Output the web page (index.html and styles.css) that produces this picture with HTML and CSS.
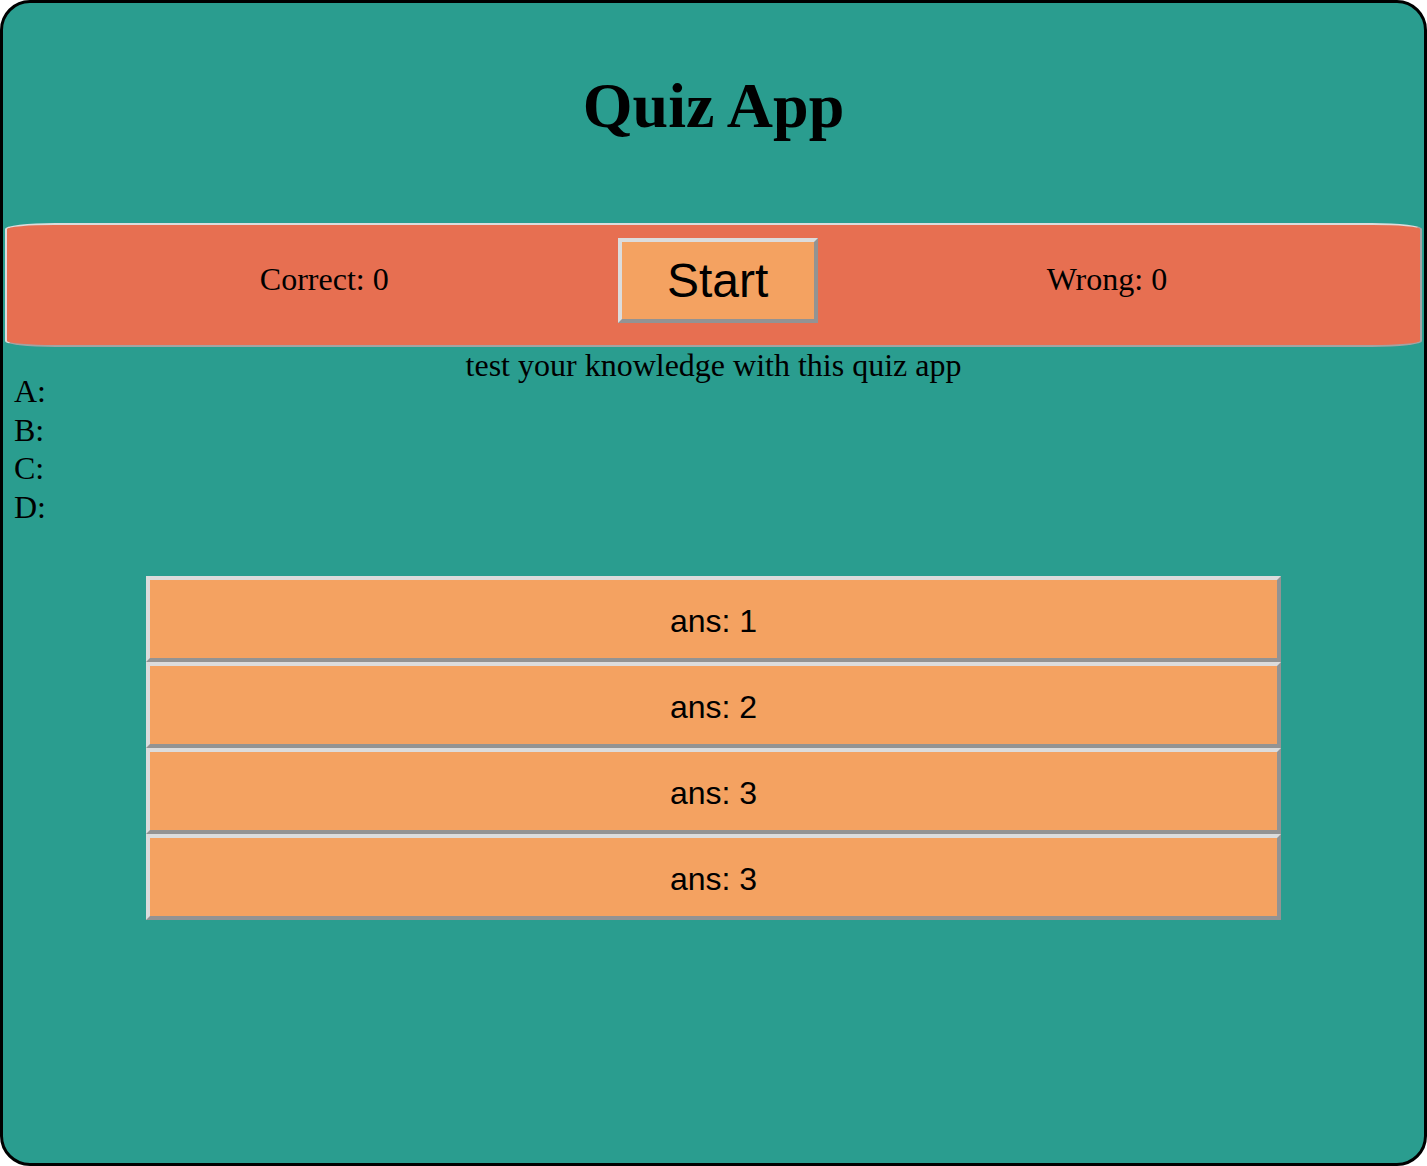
FILE: index.html
```html
<!DOCTYPE html>
<html lang="en">
<head>
<meta charset="utf-8">
<title>Quiz App</title>
<link rel="stylesheet" href="styles.css">
</head>
<body>
<div class="app">
  <h1 class="title">Quiz App</h1>
  <div class="scorebar">
    <span class="score">Correct: 0</span>
    <button class="start-btn">Start</button>
    <span class="score">Wrong: 0</span>
  </div>
  <div class="subtitle">test your knowledge with this quiz app</div>
  <div class="options">
    <div class="option">A:</div>
    <div class="option">B:</div>
    <div class="option">C:</div>
    <div class="option">D:</div>
  </div>
  <div class="answers">
    <button class="answer-btn">ans: 1</button>
    <button class="answer-btn">ans: 2</button>
    <button class="answer-btn">ans: 3</button>
    <button class="answer-btn">ans: 3</button>
  </div>
</div>
</body>
</html>
```
FILE: styles.css
```css
* {
  box-sizing: border-box;
}

html, body {
  margin: 0;
  padding: 0;
  background: #ffffff;
}

body {
  font-family: "Liberation Serif", "Times New Roman", serif;
  font-size: 32px;
  color: #000;
}

.app {
  width: 1427px;
  height: 1166px;
  background: #2a9d8f;
  border: 3px solid #000;
  border-radius: 30px;
  padding: 66px 2px 0;
}

.title {
  margin: 0;
  font-size: 64px;
  font-weight: bold;
  line-height: 74px;
  text-align: center;
}

.scorebar {
  margin-top: 80px;
  height: 124px;
  background: #e76f51;
  border-style: solid;
  border-width: 2px;
  border-color: #dcdcdc #a3a3a3 #a3a3a3 #dcdcdc;
  border-radius: 50px / 6px;
  padding-top: 13px;
  display: flex;
  justify-content: center;
  align-items: flex-start;
  gap: 229px;
}

.score {
  height: 85px;
  padding-bottom: 4px;
  display: flex;
  align-items: center;
  line-height: 36px;
}

.start-btn {
  width: 200px;
  height: 85px;
  margin: 0;
  padding: 0;
  background: #f4a261;
  border-style: solid;
  border-width: 4px;
  border-color: #dcdcdc #939393 #939393 #dcdcdc;
  font-family: "Liberation Sans", Arial, Helvetica, sans-serif;
  font-size: 48px;
  color: #000;
}

.subtitle {
  height: 25px;
  line-height: 36px;
  text-align: center;
}

.options {
  padding-left: 9px;
  line-height: 38.6px;
}

.answers {
  width: 1135px;
  margin: 50px auto 0;
  display: flex;
  flex-direction: column;
}

.answer-btn {
  height: 86px;
  margin: 0;
  padding: 4px 0 0;
  background: #f4a261;
  border-style: solid;
  border-width: 4px;
  border-color: #dcdcdc #939393 #939393 #dcdcdc;
  font-family: "Liberation Sans", Arial, Helvetica, sans-serif;
  font-size: 32px;
  color: #000;
}
```
